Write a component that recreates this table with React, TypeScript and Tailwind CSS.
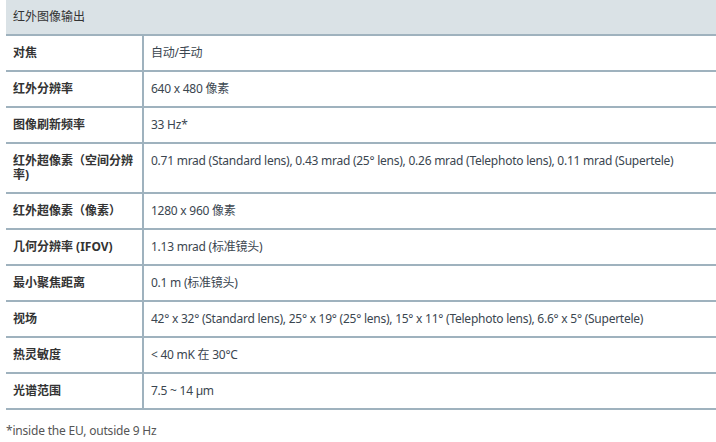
import React from "react";

const rows: { label: string; value: string; tall?: boolean }[] = [
  { label: "对焦", value: "自动/手动" },
  { label: "红外分辨率", value: "640 x 480 像素" },
  { label: "图像刷新频率", value: "33 Hz*" },
  {
    label: "红外超像素（空间分辨率)",
    value:
      "0.71 mrad (Standard lens), 0.43 mrad (25° lens), 0.26 mrad (Telephoto lens), 0.11 mrad (Supertele)",
  },
  { label: "红外超像素（像素）", value: "1280 x 960 像素" },
  { label: "几何分辨率 (IFOV)", value: "1.13 mrad (标准镜头)" },
  { label: "最小聚焦距离", value: "0.1 m (标准镜头)" },
  {
    label: "视场",
    value:
      "42° x 32° (Standard lens), 25° x 19° (25° lens), 15° x 11° (Telephoto lens), 6.6° x 5° (Supertele)",
  },
  { label: "热灵敏度", value: "< 40 mK 在 30°C" },
  { label: "光谱范围", value: "7.5 ~ 14 µm" },
];

export default function App() {
  return (
    <div
      className="w-[716px] h-[442px] bg-white overflow-hidden pl-[6px]"
      style={{ fontFamily: '"Noto Sans", "Noto Sans CJK SC", sans-serif' }}
    >
      <div className="bg-[#dae2e6] h-[36px] border-b-2 border-[#9fb2be] flex items-center px-[7px] text-[12px] text-[#333]">
        红外图像输出
      </div>
      {rows.map((r) => (
        <div key={r.label} className="flex border-b-2 border-[#9fb2be] text-[12px] leading-[14px]">
          <div className="w-[138px] shrink-0 border-r-2 border-[#9fb2be] px-[7px] py-[10px] font-bold text-[#333]">
            {r.label}
          </div>
          <div className="flex-1 px-[7px] py-[10px] text-[#3b4650] whitespace-nowrap tracking-[-0.25px]">
            {r.value}
          </div>
        </div>
      ))}
      <div className="pt-[14px] text-[12px] leading-[14px] text-[#555] tracking-[-0.2px]">
        *inside the EU, outside 9 Hz
      </div>
    </div>
  );
}
